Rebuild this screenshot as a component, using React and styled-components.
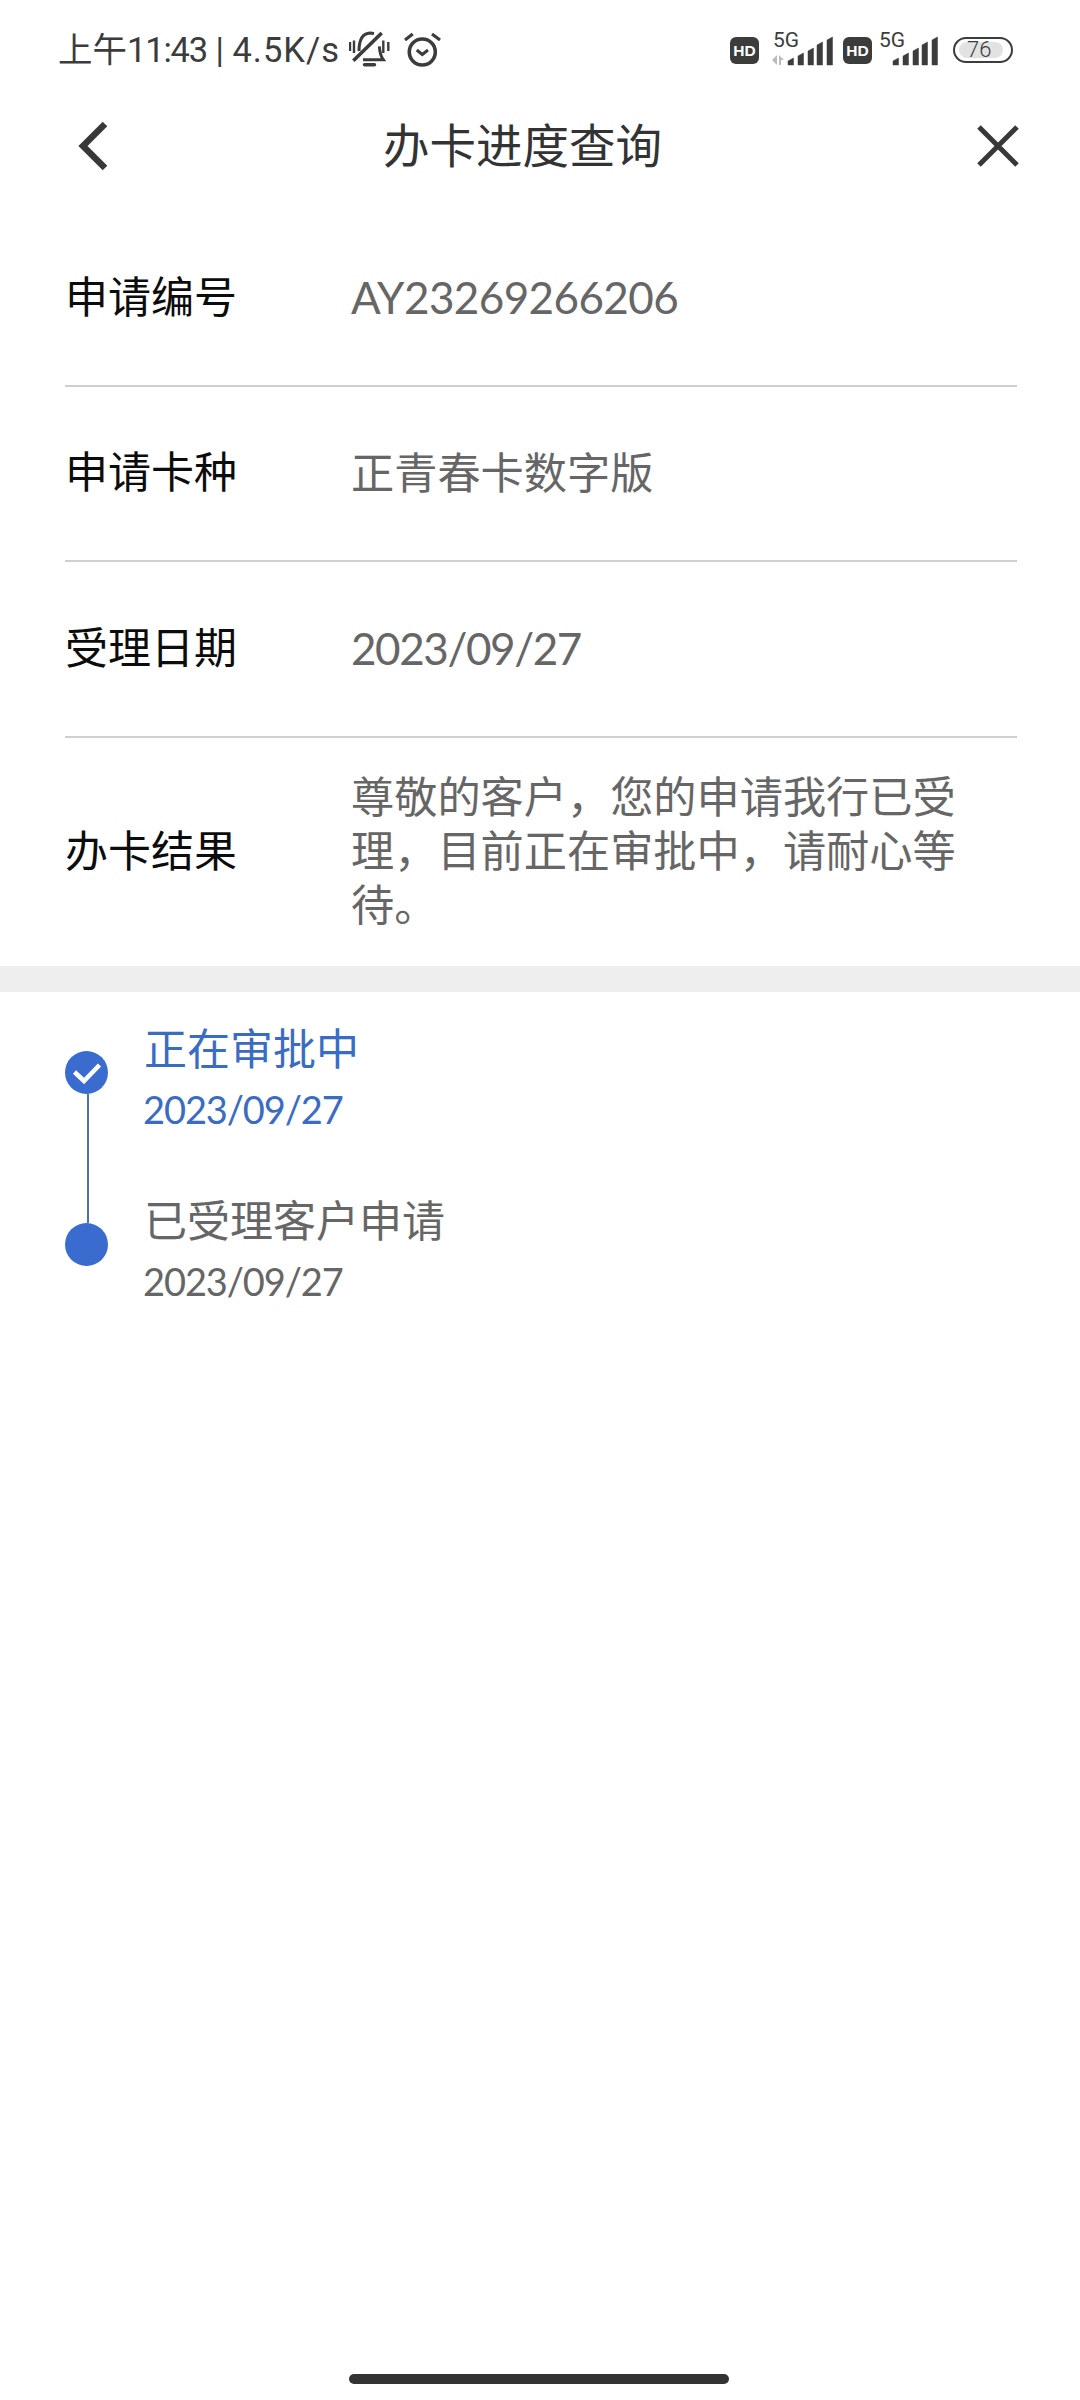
import React from "react";
import styled, { createGlobalStyle } from "styled-components";

const Global = createGlobalStyle`
  html, body { margin: 0; padding: 0; background: #fff; }
  body { font-family: "Lato", "Noto Sans CJK SC", sans-serif; }
`;
const CJK = `"Noto Sans CJK SC", sans-serif`;
const NUM = `"Lato", "Noto Sans CJK SC", sans-serif`;
const INK = "#3c3c3c";

const Page = styled.div`
  width: 1080px; height: 2400px; background: #fff; display: flex; flex-direction: column; position: relative; overflow: hidden;
`;
const StatusBar = styled.div`
  height: 100px; box-sizing: border-box; padding: 0 67px 0 58px; display: flex; align-items: center; justify-content: space-between; color: ${INK};
`;
const StatusLeft = styled.div`display: flex; align-items: center; font: 400 34.5px/100px "Roboto", "Noto Sans CJK SC", sans-serif; white-space: pre;`;
const Clock = styled.span`letter-spacing: -1.2px;`;
const Speed = styled.span`letter-spacing: 1px;`;
const StatusRight = styled.div`display: flex; align-items: center;`;
const Nav = styled.div`
  height: 92px; margin-bottom: 20px; display: flex; align-items: center; justify-content: space-between; padding: 0 61px 0 78px; position: relative;
`;
const Title = styled.div`
  position: absolute; left: 383px; top: -3px; font: 400 46.5px/92px ${CJK}; color: #333;
`;
const Row = styled.div`
  margin: 0 63px 0 65px; display: flex; align-items: center; box-sizing: border-box; height: ${p => p.$h}px;
  border-bottom: ${p => (p.$last ? "none" : "2px solid #cfcfcf")};
`;
const Label = styled.div`width: 286px; flex: none; font: 400 43px/50px ${CJK}; color: #0c0c0c; padding-bottom: 9px;`;
const Value = styled.div`flex: 1; font: 400 43.2px/54px ${NUM}; color: #666; padding: 0 30px 4px 0;`;
const CodeValue = styled(Value)`font-size: 44px; letter-spacing: -0.6px;`;
const DateValue = styled(Value)`font-size: 44px; letter-spacing: -1.4px; padding-bottom: 3px;`;
const Band = styled.div`height: 26px; background: #eeeeee;`;
const Timeline = styled.div`padding: 29px 0 0 65px;`;
const Step = styled.div`display: flex; height: 172px;`;
const Rail = styled.div`width: 79px; flex: none; display: flex; flex-direction: column; align-items: flex-start;`;
const Dot = styled.div`
  width: 43px; height: 43px; border-radius: 50%; background: #3a6cd0; margin-top: 30px; display: flex; align-items: center; justify-content: center; flex: none;
`;
const Line = styled.div`width: 2px; margin-left: 22px; height: 129px; background: #4a72b0; flex: none;`;
const StepText = styled.div`color: ${p => (p.$active ? "#3a6cc4" : "#666")};`;
const StepTitle = styled.div`font: 400 43px/50px ${CJK}; color: inherit;`;
const StepDate = styled.div`font: 400 38px/50px ${NUM}; letter-spacing: -1.1px; color: inherit; margin: 13px 0 0 -1px;`;
const HomeBar = styled.div`
  position: absolute; left: 349px; top: 2374px; width: 380px; height: 10px; border-radius: 5px; background: #333;
`;
const IconSlot = styled.svg`flex: none; margin-left: ${p => p.$ml || 0}px; margin-bottom: ${p => p.$mb || 0}px;`;

const Bell = () => (
  <IconSlot $ml={9} width="42" height="38" viewBox="0 0 42 38" fill="none" stroke={INK} strokeWidth="3">
    <path d="M10 20C10 10 13 2.5 21 2l4 .5" />
    <path d="M30.3 15.3c.5 6 1.5 10 4 13.4H14" />
    <path d="M15.5 33.7h10" strokeLinecap="round" strokeWidth="3.4" />
    <path d="M4.3 29.7 32.7 2" strokeWidth="3.6" />
    <path d="M1 11v9M5 9.5v12.5M34.3 9.5v12.5M39.3 11v9" strokeWidth="2.4" />
  </IconSlot>
);
const Alarm = () => (
  <IconSlot $ml={13} width="37" height="36" viewBox="0 0 37 36" fill="none" stroke={INK} strokeWidth="3.6">
    <circle cx="18.3" cy="20" r="13" />
    <path d="M12.7 18l5.6 4.5L24 18" strokeWidth="3" />
    <path d="M1 8l7.7-6M28 2l8 6" strokeWidth="3.2" />
  </IconSlot>
);
const HD = ({ ml }) => (
  <IconSlot $ml={ml} width="29" height="27" viewBox="0 0 29 27">
    <rect width="29" height="27" rx="6" fill={INK} />
    <text x="14.5" y="19" textAnchor="middle" fill="#fff" fontFamily="Liberation Sans" fontWeight="700" fontSize="15.5">HD</text>
  </IconSlot>
);
const Signal = ({ arrows, ml, w, off }) => {
  const xs = [0, 10, 20, 29, 39];
  const tops = [28, 23, 18, 12, 7];
  return (
    <IconSlot $ml={ml} $mb={10} width={w} height="42" viewBox={`0 -6 ${w} 42`}>
      <text x="2" y="17" fontFamily="Roboto" fontSize="21" fill={INK}>5G</text>
      {arrows && <path d="M1 30l5-5v10zM8 25l5 5h-3v5h-2z" fill="#bbb" />}
      {xs.map((x, i) => (
        <path key={x} d={`M${off + x} 35v-${35 - tops[i] - 3}l5.5-3v${35 - tops[i]}z`} fill={INK} strokeLinejoin="round" stroke={INK} strokeWidth="0.5" />
      ))}
    </IconSlot>
  );
};

const Chevron = () => (
  <svg width="30" height="50" viewBox="0 0 30 50" fill="none" stroke="#383838" strokeWidth="6.5">
    <path d="M27 3 5 25l22 22" />
  </svg>
);
const Close = () => (
  <svg width="42" height="42" viewBox="0 0 42 42" fill="none" stroke="#383838" strokeWidth="5">
    <path d="M2 2l38 38M40 2 2 40" />
  </svg>
);
const Check = () => (
  <svg width="30" height="22" viewBox="0 0 30 22" fill="none" stroke="#fff" strokeWidth="4.5">
    <path d="M2.500 10l9.500 9L27.500 3" />
  </svg>
);

const Battery = styled.div`
  margin-left: 15px; width: 60px; height: 26px; box-sizing: border-box; border: 2.5px solid ${INK}; border-radius: 13px; position: relative; overflow: hidden; font: 300 22px/21px "Roboto", sans-serif; color: ${INK}; padding-left: 12px;
`;
const Fill = styled.div`position: absolute; left: 4px; top: 3px; bottom: 3px; width: 44px; background: #e2e2e2; border-radius: 8px;`;
const BatteryText = styled.span`position: relative;`;

export default function App() {
  return (
    <Page>
      <Global />
      <StatusBar>
        <StatusLeft>上午<Clock>11:43</Clock> | <Speed>4.5K/s</Speed><Bell /><Alarm /></StatusLeft>
        <StatusRight>
          <HD />
          <Signal w={62} ml={12} off={17} arrows />
          <HD ml={10} />
          <Signal w={61} ml={5} off={16} />
          <Battery><Fill /><BatteryText>76</BatteryText></Battery>
        </StatusRight>
      </StatusBar>
      <Nav>
        <Chevron />
        <Title>办卡进度查询</Title>
        <Close />
      </Nav>
      <Row $h={175}><Label>申请编号</Label><CodeValue>AY23269266206</CodeValue></Row>
      <Row $h={175}><Label>申请卡种</Label><Value>正青春卡数字版</Value></Row>
      <Row $h={176}><Label>受理日期</Label><DateValue>2023/09/27</DateValue></Row>
      <Row $h={228} $last>
        <Label>办卡结果</Label>
        <Value>尊敬的客户，您的申请我行已受理，目前正在审批中，请耐心等待。</Value>
      </Row>
      <Band />
      <Timeline>
        <Step>
          <Rail>
            <Dot><Check /></Dot>
            <Line />
          </Rail>
          <StepText $active>
            <StepTitle>正在审批中</StepTitle>
            <StepDate>2023/09/27</StepDate>
          </StepText>
        </Step>
        <Step>
          <Rail><Dot /></Rail>
          <StepText>
            <StepTitle>已受理客户申请</StepTitle>
            <StepDate>2023/09/27</StepDate>
          </StepText>
        </Step>
      </Timeline>
      <HomeBar />
    </Page>
  );
}
